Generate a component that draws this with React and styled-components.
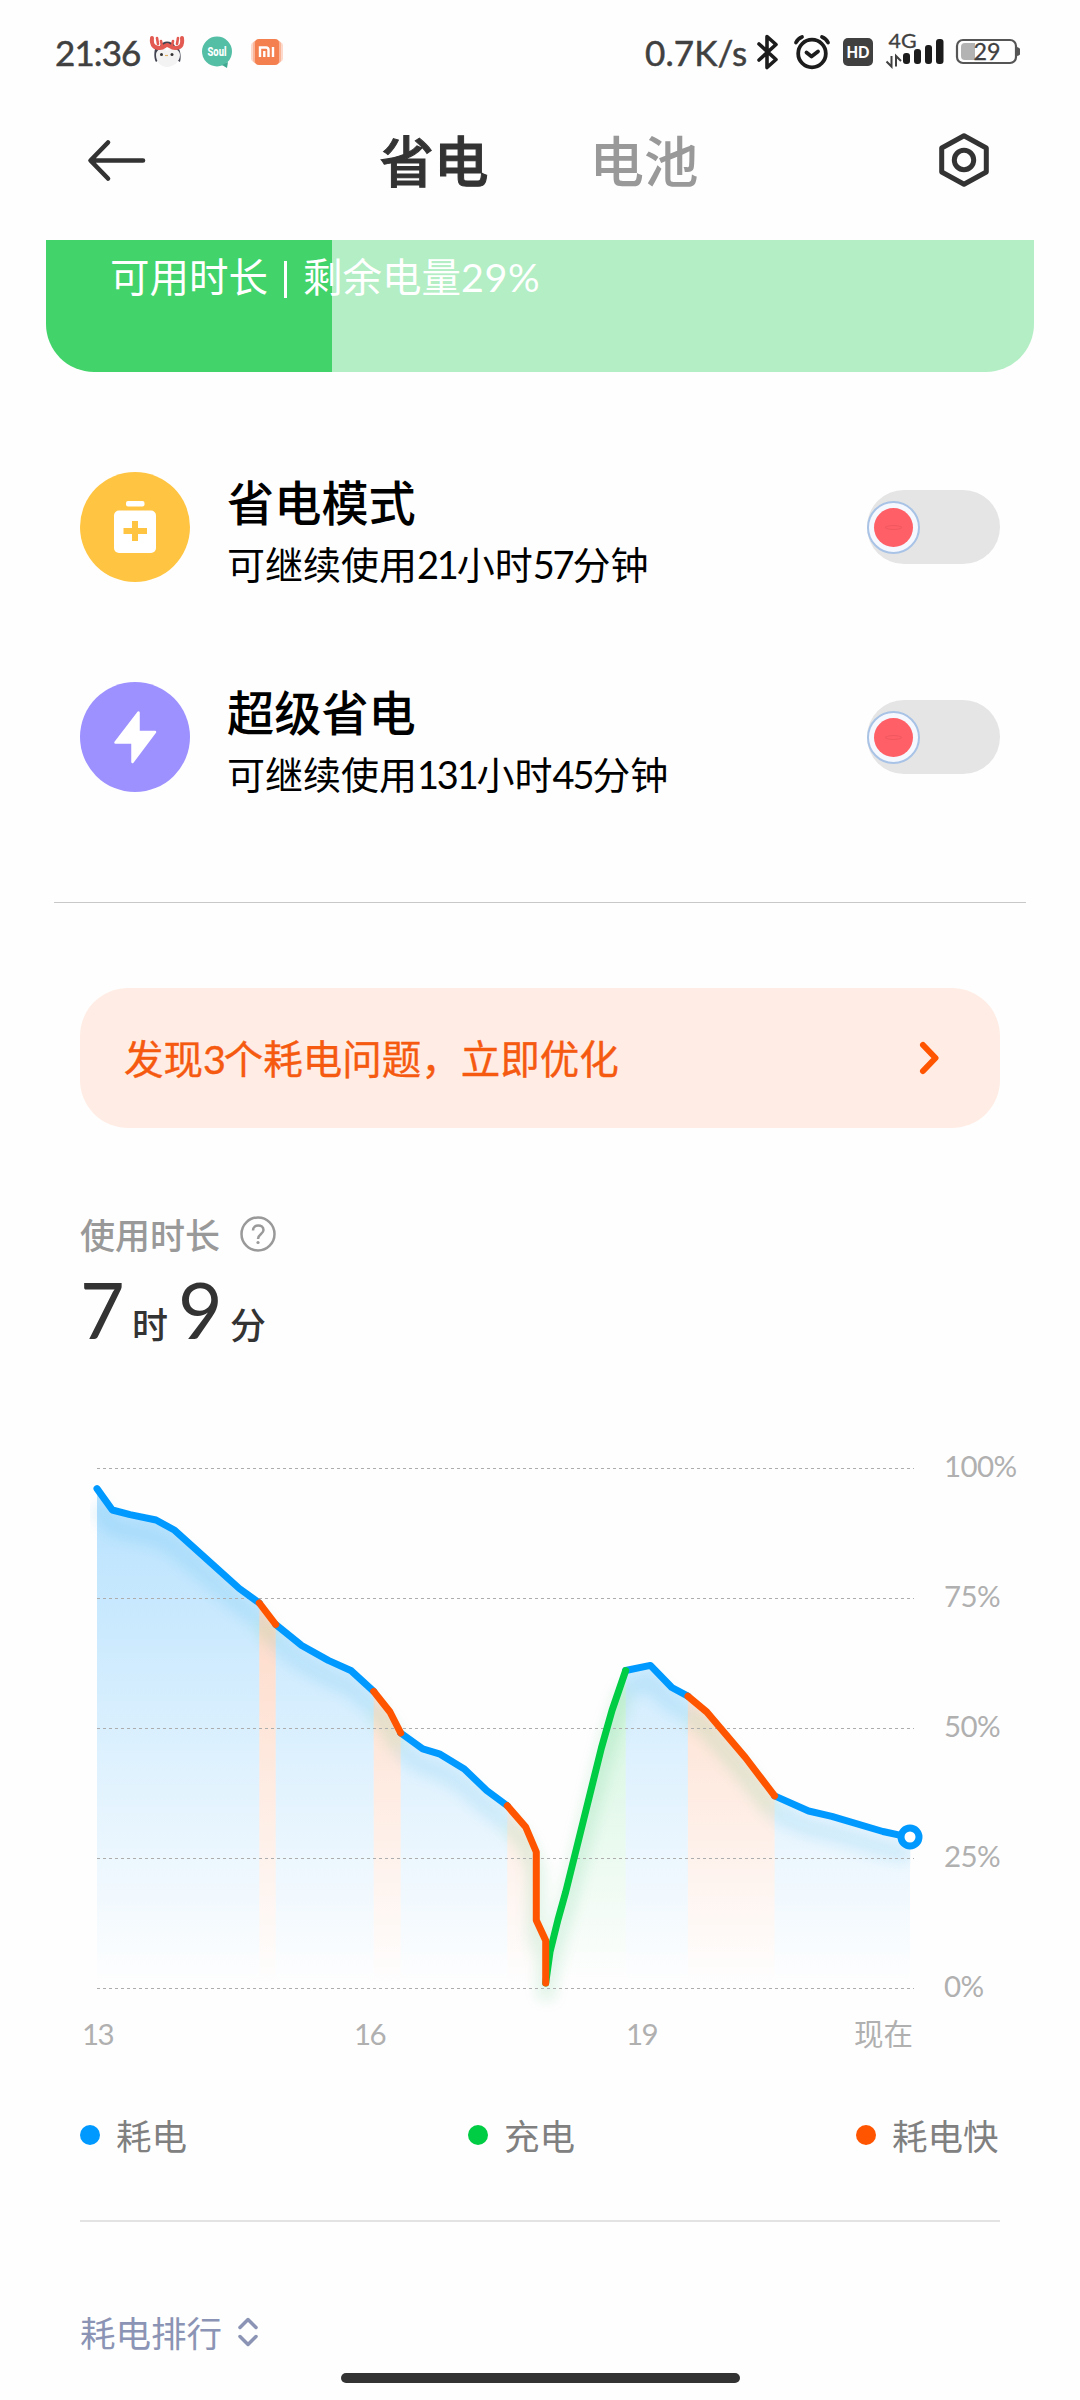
import React from "react";
import styled, { createGlobalStyle } from "styled-components";

const BLUE = "#0099ff";
const GREEN = "#00cc44";
const ORANGE = "#ff5500";

const GlobalStyle = createGlobalStyle`
  * {
    box-sizing: border-box;
  }
  body {
    margin: 0;
    background: #fefefe;
    font-family: "Noto Sans CJK SC", sans-serif;
    color: #333;
  }
  h1, h2, p {
    margin: 0;
    font-weight: 400;
  }
  svg {
    display: block;
    flex: none;
  }
`;

const Page = styled.div`
  width: 1080px;
  height: 2400px;
  display: flex;
  flex-direction: column;
  overflow: hidden;
`;

const Num = styled.span`
  font-family: "Lato", sans-serif;
  letter-spacing: ${(p) => p.$spacing || "-2.2px"};
`;

/* status bar */

const ScStatusBar = styled.div`
  height: 104px;
  padding: 0 60px 0 55px;
  display: flex;
  align-items: center;
  justify-content: space-between;

  .group {
    display: flex;
    align-items: center;
  }
`;

const StatusText = styled.span`
  font-family: "Lato", sans-serif;
  font-size: 35px;
  line-height: 40px;
  width: ${(p) => p.$width}px;
  letter-spacing: ${(p) => p.$spacing}px;
  color: #404040;
  -webkit-text-stroke: 0.5px #404040;
  white-space: nowrap;
`;

const StatusBar = () => (
  <ScStatusBar>
    <div className="group">
      <StatusText $width={93} $spacing={-0.9}>
        21:36
      </StatusText>
      <svg width="140" height="40" viewBox="148 32 140 40">
        <path d="M155 49c-1 4-1 10 1 13l4-3V46zM179 49c2 4 2 10 1 13l-5-3V46z" fill="#414350" />
        <path d="M160 46c2-6 12-6 15 0z" fill="#414350" />
        <path
          d="M167 51c-2-4-11-3-11 4 0 7 5 12 11 12s13-5 13-12c0-7-10-8-13-4z"
          fill="#f3f3f4"
        />
        <path
          d="M152 38c-1 8 3 10 8 10 4 0 5-3 7-3s4 3 8 3c5 0 8-2 7-10"
          fill="none"
          stroke="#e25a51"
          strokeWidth="4"
          strokeLinecap="round"
        />
        <path
          d="M157 38l1 6M178 38l-1 6M161 41l1 5M173 41l-1 5"
          fill="none"
          stroke="#e25a51"
          strokeWidth="2.600"
          strokeLinecap="round"
        />
        <circle cx="161.500" cy="54.500" r="1.500" fill="#333" />
        <circle cx="172" cy="54.500" r="1.500" fill="#333" />
        <path d="M165 55.500h3" stroke="#e0b060" strokeWidth="1.200" />
        <circle cx="217" cy="51.500" r="15" fill="#55bfa6" />
        <path d="M222 65l6-3-1 6z" fill="#3fa890" />
        <text
          x="217"
          y="56"
          textAnchor="middle"
          textLength="19"
          lengthAdjust="spacingAndGlyphs"
          fontFamily="Roboto"
          fontSize="13"
          fontWeight="800"
          fill="#fff"
        >
          Soul
        </text>
        <rect x="251" y="42" width="32" height="20" rx="4" fill="#fcd9cb" />
        <rect x="253" y="40.500" width="28" height="23" rx="4" fill="#fab497" />
        <rect x="255" y="39" width="24" height="26" rx="4" fill="#f4804f" />
        <path
          d="M260 57v-9.500h6q2.500 0 2.500 2.500v7M264.300 51v6M273 47v10"
          fill="none"
          stroke="#fff"
          strokeWidth="2.400"
        />
      </svg>
    </div>
    <div className="group">
      <StatusText $width={109} $spacing={0.1}>
        0.7K/s
      </StatusText>
      <svg width="266" height="60" viewBox="754 22 266 60">
        <path
          d="M759 44l17 15.500-9 8v-31l9 8L759 60"
          fill="none"
          stroke="#1c1c1c"
          strokeWidth="3.600"
          strokeLinejoin="round"
          strokeLinecap="round"
        />
        <g fill="none" stroke="#1c1c1c" strokeWidth="3.800" strokeLinecap="round">
          <circle cx="812" cy="53.500" r="13.800" />
          <path d="M806.500 52.500l5 4 6.500-5" strokeLinejoin="round" />
          <path d="M796 42.500q2-4 6-5.500M828 42.500q-2-4-6-5.500" />
        </g>
        <rect x="843" y="38" width="30" height="28" rx="5" fill="#404040" />
        <text
          x="858"
          y="57.500"
          textAnchor="middle"
          fontFamily="Lato"
          fontSize="16"
          fontWeight="900"
          textLength="23"
          lengthAdjust="spacingAndGlyphs"
          fill="#fff"
        >
          HD
        </text>
        <text
          x="888.500"
          y="48"
          fontFamily="Lato"
          fontSize="19.500"
          textLength="28"
          lengthAdjust="spacingAndGlyphs"
          fill="#404040"
          stroke="#404040"
          strokeWidth=".3"
        >
          4G
        </text>
        <path d="M891.500 56v10.500l-5-5M896 66.500V56l5 5" fill="none" stroke="#404040" strokeWidth="2" />
        <g fill="#1c1c1c">
          <rect x="903" y="53" width="7" height="11" rx="3" />
          <rect x="914" y="49" width="7" height="15" rx="3" />
          <rect x="925" y="45" width="7" height="19" rx="3" />
          <rect x="936" y="39" width="7.500" height="25" rx="3" />
        </g>
        <rect x="957" y="40" width="59" height="23" rx="6" fill="none" stroke="#555" strokeWidth="2.200" />
        <path d="M961 47q0-4 4-4h10v17h-10q-4 0-4-4z" fill="#b3b3b3" />
        <path d="M1017 47q4 1 4 4.500t-4 4.500z" fill="#555" />
        <text
          x="973.500"
          y="59.500"
          fontFamily="Lato"
          fontSize="22.500"
          textLength="27"
          lengthAdjust="spacingAndGlyphs"
          fill="#404040"
          stroke="#404040"
          strokeWidth=".3"
        >
          29
        </text>
      </svg>
    </div>
  </ScStatusBar>
);

/* header */

const ScHeader = styled.div`
  height: 136px;
  padding: 0 88px 24px 86px;
  display: flex;
  align-items: center;
  justify-content: space-between;
`;

const Tabs = styled.div`
  display: flex;
  gap: 101px;
  margin: -3px 0 0 -6px;
`;

const Tab = styled.h1`
  font-size: 54.5px;
  line-height: 80px;
  font-weight: 500;
  color: ${(p) => (p.$active ? "#333" : "#999")};
  -webkit-text-stroke: ${(p) => (p.$active ? "1px #333" : "0")};
`;

const Header = () => (
  <ScHeader>
    <svg width="62" height="44" viewBox="0 0 62 44">
      <path
        d="M22 4.500L4.500 22.500 22 40.500M5 22.500h52"
        fill="none"
        stroke="#333"
        strokeWidth="4.600"
        strokeLinecap="round"
        strokeLinejoin="round"
      />
    </svg>
    <Tabs>
      <Tab $active>省电</Tab>
      <Tab>电池</Tab>
    </Tabs>
    <svg width="56" height="56" viewBox="0 0 56 56" fill="none" stroke="#333" strokeWidth="5">
      <path d="M28 3.700L50.300 16v24L28 52.300 5.700 40V16z" strokeLinejoin="round" />
      <circle cx="28" cy="28" r="9.700" />
    </svg>
  </ScHeader>
);

/* battery card, scrolled under the header */

const BatteryCard = styled.div`
  height: 132px;
  margin: 0 46px;
  padding: 5px 64px;
  border-radius: 0 0 48px 48px;
  background: linear-gradient(to right, #42d46a 286px, #b3eec5 286px);
  color: #fff;
  font-size: 39.500px;
  line-height: 60px;
  white-space: nowrap;

  .bar {
    display: inline-block;
    width: 3px;
    height: 37px;
    margin: 0 16px;
    vertical-align: -6px;
    background: #fff;
  }
`;

/* power modes */

const ModeList = styled.div`
  padding: 72px 80px 0;
  height: 530px;
`;

const ModeRow = styled.div`
  height: 166px;
  margin-bottom: 44px;
  display: flex;
  align-items: center;

  .info {
    flex: 1;
    margin-left: 37px;
    padding-top: 11px;
  }
`;

const ModeIcon = styled.div`
  width: 110px;
  height: 110px;
  border-radius: 50%;
  background: ${(p) => p.$color};
`;

const ModeTitle = styled.h2`
  color: #000;
  font-size: 47.2px;
  line-height: 62px;
  font-weight: 500;
`;

const ModeNote = styled.p`
  color: #000;
  font-size: 38px;
  line-height: 62px;
`;

const Track = styled.div`
  width: 133px;
  height: 74px;
  border-radius: 37px;
  background: #e5e5e5;
  display: flex;
  align-items: center;
`;

const Knob = styled.div`
  width: 53px;
  height: 53px;
  border: 2px solid #a8c3e6;
  border-radius: 50%;
  background: #f5f8ff;
  display: flex;
  align-items: center;
  justify-content: center;

  .dot {
    width: 39px;
    height: 39px;
    border-radius: 50%;
    background: #ff6068;
    display: flex;
    align-items: center;
    justify-content: center;
  }
  .mark {
    width: 17px;
    height: 5px;
    border: 1px solid #f0575f;
    border-radius: 50%;
  }
`;

const Switch = () => (
  <Track>
    <Knob>
      <div className="dot">
        <div className="mark" />
      </div>
    </Knob>
  </Track>
);

const Mode = ({ color, icon, title, children }) => (
  <ModeRow>
    <ModeIcon $color={color}>
      <svg width="110" height="110" viewBox="0 0 110 110">
        {icon}
      </svg>
    </ModeIcon>
    <div className="info">
      <ModeTitle>{title}</ModeTitle>
      <ModeNote>{children}</ModeNote>
    </div>
    <Switch />
  </ModeRow>
);

const batteryIcon = (
  <>
    <rect x="46" y="29" width="18.500" height="5.500" rx="2" fill="#fff" />
    <rect x="34" y="38.500" width="42" height="42.500" rx="5" fill="#fff" />
    <path d="M55 49v20M43.500 59h23.500" stroke="#ffc542" strokeWidth="6" />
  </>
);

const boltIcon = (
  <path
    d="M58.500 30.500v19.500h16.500L52.500 80V60.500H35.500z"
    fill="#fff"
    stroke="#fff"
    strokeWidth="2.500"
    strokeLinejoin="round"
  />
);

const Divider = styled.div`
  flex: none;
  height: ${(p) => p.$size}px;
  margin: 0 ${(p) => p.$inset}px;
  background: ${(p) => p.$color};
`;

/* optimise banner */

const Banner = styled.div`
  margin: 85px 80px 0;
  height: 140px;
  flex: none;
  padding: 0 58px 0 44px;
  border-radius: 48px;
  background: #ffede5;
  color: #f55a10;
  display: flex;
  align-items: center;
  justify-content: space-between;
  font-size: 39.5px;
  line-height: 60px;
  -webkit-text-stroke: 0.4px #f55a10;
`;

/* usage */

const UsageLabel = styled.div`
  margin: 79px 80px 0;
  height: 54px;
  display: flex;
  align-items: center;
  gap: 20px;
  font-size: 35px;
  font-weight: 500;
  line-height: 50px;
  color: #999;
`;

const UsageTime = styled.div`
  margin: -2px 80px 0;
  height: 129px;
  display: flex;
  align-items: baseline;
  line-height: 100px;

  .value {
    font-family: "Lato", sans-serif;
    font-size: 77px;
    width: 52px;
    letter-spacing: -2px;
  }
  .unit {
    font-size: 36px;
    font-weight: 500;
    width: 46px;
  }
`;

/* chart */

const segments = [
  { color: BLUE, points: [[97, 1488.600], [112.300, 1510], [130, 1514.600], [156, 1520], [174.700, 1530.300], [239.300, 1588.500], [259.300, 1603]] },
  { color: BLUE, points: [[275.700, 1624.500], [301.700, 1645.500], [328.300, 1660.400], [351.300, 1670.800], [373.700, 1691.400]] },
  { color: BLUE, points: [[400.700, 1733], [422.700, 1748.800], [439.300, 1753.800], [464.300, 1769], [486.700, 1790.500], [507.300, 1805.800]] },
  { color: BLUE, points: [[625.700, 1670.500], [650.400, 1665.400], [671.800, 1687.500], [687.900, 1696.200]] },
  { color: BLUE, points: [[774.600, 1795.900], [808.600, 1811], [831.800, 1816.400], [882.900, 1831.500], [910, 1837.400]] },
  { color: GREEN, points: [[545.700, 1983], [550, 1952], [557.900, 1920], [565.700, 1892], [601.400, 1748], [612, 1710.500], [625.700, 1670.500]] },
  { color: ORANGE, points: [[259.300, 1603], [275.700, 1624.500]] },
  { color: ORANGE, points: [[373.700, 1691.400], [390, 1712], [400.700, 1733]] },
  { color: ORANGE, points: [[507.300, 1805.800], [525.700, 1827], [536.300, 1852], [536.300, 1920.300], [545.700, 1940.500], [545.700, 1983]] },
  { color: ORANGE, points: [[687.900, 1696.200], [706.800, 1712], [745.400, 1757.500], [774.600, 1795.900]] },
];

const levels = [
  ["100%", 1468],
  ["75%", 1598],
  ["50%", 1728],
  ["25%", 1858],
  ["0%", 1988],
];

const hours = [
  ["13", 82],
  ["16", 354],
  ["19", 626],
];

const toPath = (points) => "M" + points.map((p) => p.join(" ")).join("L");
const toArea = (points) =>
  `${toPath(points)}L${points[points.length - 1][0]} 1988L${points[0][0]} 1988Z`;

const ScChart = styled.div`
  height: 680px;
  flex: none;

  text {
    font-family: "Lato", "Noto Sans CJK SC", sans-serif;
    font-size: 29.5px;
    fill: #b0b0b0;
  }
`;

const Chart = () => (
  <ScChart>
    <svg width="1080" height="680" viewBox="0 1388 1080 680">
      <defs>
        {[BLUE, GREEN, ORANGE].map((color) => (
          <linearGradient
            key={color}
            id={`fill${color.slice(1)}`}
            gradientUnits="userSpaceOnUse"
            x1="0"
            y1="1488"
            x2="0"
            y2="1985"
          >
            <stop offset="0" stopColor={color} stopOpacity="0.28" />
            <stop offset="1" stopColor={color} stopOpacity="0" />
          </linearGradient>
        ))}
        <filter id="soft" filterUnits="userSpaceOnUse" x="60" y="1450" width="900" height="600">
          <feGaussianBlur stdDeviation="7" />
        </filter>
        <clipPath id="plot">
          <rect x="90" y="1460" width="821" height="570" />
        </clipPath>
      </defs>
      {segments.map(({ color, points }, i) => (
        <path key={i} d={toArea(points)} fill={`url(#fill${color.slice(1)})`} />
      ))}
      <g clipPath="url(#plot)">
        <g filter="url(#soft)" fill="none" strokeWidth="18" opacity="0.11" transform="translate(0 17)">
          {segments.map(({ color, points }, i) => (
            <path
              key={i}
              d={toPath(points)}
              stroke={color === BLUE ? "#009add" : "#00aa44"}
              strokeLinejoin="round"
            />
          ))}
        </g>
      </g>
      {levels.map(([label, y]) => (
        <g key={label}>
          <path d={`M97 ${y + 0.5}H914`} stroke="#adadad" strokeDasharray="3 3" />
          <text x="944" y={y + 9} letterSpacing="-0.6">
            {label}
          </text>
        </g>
      ))}
      {segments.map(({ color, points }, i) => (
        <path
          key={i}
          d={toPath(points)}
          fill="none"
          stroke={color}
          strokeWidth="7"
          strokeLinecap="round"
          strokeLinejoin="round"
        />
      ))}
      <circle cx="910" cy="1837" r="9" fill="#fff" stroke={BLUE} strokeWidth="7" />
      {hours.map(([label, x]) => (
        <text key={label} x={x} y="2045" letterSpacing="-1.5">
          {label}
        </text>
      ))}
      <text x="854" y="2045">
        现在
      </text>
    </svg>
  </ScChart>
);

const Legend = styled.div`
  margin: 0 80px;
  height: 152px;
  padding-bottom: 18px;
  display: flex;
  align-items: center;
  justify-content: space-between;
`;

const LegendItem = styled.div`
  display: flex;
  align-items: center;
  width: 144px;
  font-size: 35.5px;
  line-height: 50px;
  color: #808080;
  white-space: nowrap;

  &:before {
    content: "";
    width: 20px;
    height: 20px;
    margin-right: 16px;
    border-radius: 50%;
    background: ${(p) => p.$color};
  }
`;

const Ranking = styled.div`
  margin: 0 80px;
  height: 151px;
  padding-top: 68px;
  display: flex;
  align-items: center;
  gap: 15px;
  font-size: 35.5px;
  color: #8b94b4;
`;

const HomeBar = styled.div`
  width: 399px;
  height: 10px;
  margin: 0 auto;
  border-radius: 5px;
  background: #333;
`;

export default function App() {
  return (
    <Page>
      <GlobalStyle />
      <StatusBar />
      <Header />
      <BatteryCard>
        可用时长
        <span className="bar" />
        剩余电量<Num $spacing="0.6px">29%</Num>
      </BatteryCard>
      <ModeList>
        <Mode color="#ffc542" icon={batteryIcon} title="省电模式">
          可继续使用<Num>21</Num>小时<Num>57</Num>分钟
        </Mode>
        <Mode color="#9d91ff" icon={boltIcon} title="超级省电">
          可继续使用<Num>131</Num>小时<Num>45</Num>分钟
        </Mode>
      </ModeList>
      <Divider $size={1} $inset={54} $color="#c8c8c8" />
      <Banner>
        <span>
          发现<Num>3</Num>个耗电问题，立即优化
        </span>
        <svg width="24" height="36" viewBox="0 0 24 36">
          <path
            d="M5 5l12.500 13L5 31"
            fill="none"
            stroke={ORANGE}
            strokeWidth="6"
            strokeLinecap="round"
            strokeLinejoin="round"
          />
        </svg>
      </Banner>
      <UsageLabel>
        <span>使用时长</span>
        <svg width="36" height="36" viewBox="0 0 36 36" fill="none" stroke="#999">
          <circle cx="18" cy="18" r="16.500" strokeWidth="2.500" />
          <path d="M13 14.500c0-7 10.500-6.500 10.500-.5 0 4-5.500 4-5.500 9" strokeWidth="2.500" />
          <circle cx="18" cy="26.500" r="1.600" fill="#999" stroke="none" />
        </svg>
      </UsageLabel>
      <UsageTime>
        <span className="value">7</span>
        <span className="unit">时</span>
        <span className="value">9</span>
        <span className="unit">分</span>
      </UsageTime>
      <Chart />
      <Legend>
        <LegendItem $color={BLUE}>耗电</LegendItem>
        <LegendItem $color={GREEN}>充电</LegendItem>
        <LegendItem $color={ORANGE}>耗电快</LegendItem>
      </Legend>
      <Divider $size={2} $inset={80} $color="#e3e3e3" />
      <Ranking>
        <span>耗电排行</span>
        <svg width="22" height="32" viewBox="0 0 22 32">
          <path
            d="M3 11.500l8-8 8 8M3 20.500l8 8 8-8"
            fill="none"
            stroke="#8b94b4"
            strokeWidth="3.500"
            strokeLinecap="round"
            strokeLinejoin="round"
          />
        </svg>
      </Ranking>
      <HomeBar />
    </Page>
  );
}
